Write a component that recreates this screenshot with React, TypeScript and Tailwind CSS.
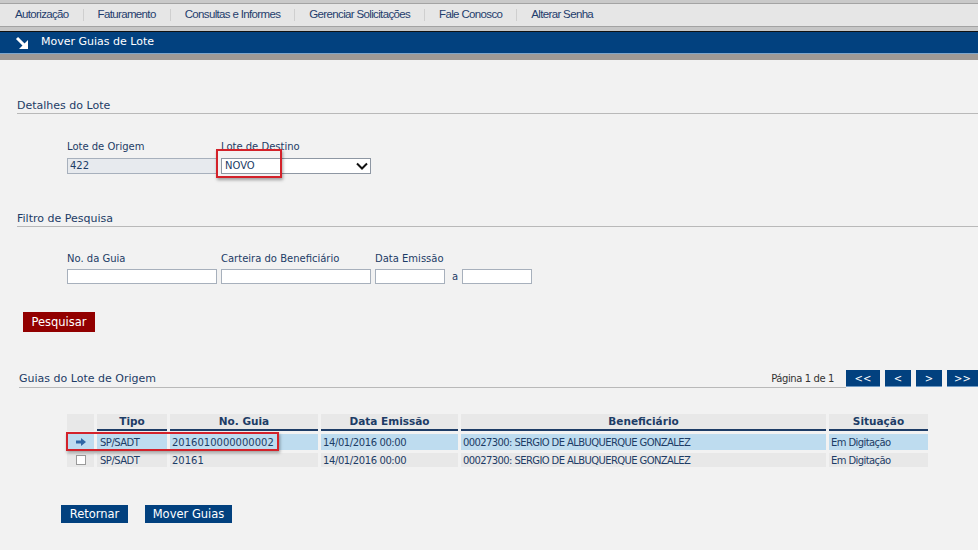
import { useState } from "react";

const menu = [
  "Autorização",
  "Faturamento",
  "Consultas e Informes",
  "Gerenciar Solicitações",
  "Fale Conosco",
  "Alterar Senha",
];

const rows = [
  { tipo: "SP/SADT", guia: "2016010000000002", data: "14/01/2016 00:00", benef: "00027300: SERGIO DE ALBUQUERQUE GONZALEZ", sit: "Em Digitação", sel: true },
  { tipo: "SP/SADT", guia: "20161", data: "14/01/2016 00:00", benef: "00027300: SERGIO DE ALBUQUERQUE GONZALEZ", sit: "Em Digitação", sel: false },
];

function SectionTitle(props: any) {
  return (
    <div className="ml-[17px] border-b border-[#b9b9b9] h-[15px] leading-[13px] text-[11px] text-[#1d3c66]">
      {props.children}
    </div>
  );
}

export default function App() {
  const [destino, setDestino] = useState("NOVO");

  return (
    <div className="w-[978px] h-[550px] bg-[#f2f2f2] overflow-hidden font-['DejaVu_Sans',sans-serif] text-[#1d3c66]">
      {/* top menu */}
      <div className="h-[4px] bg-[#c9c9c9] border-b border-[#a3a3a3]" />
      <div className="h-[22px] bg-[#e6e6e6] flex items-center pl-[15px] font-['Liberation_Sans',sans-serif] text-[11.5px] tracking-[-0.65px] text-[#1f3d6d]">
        {menu.map((m, i) => (
          <div key={m} className="flex items-center">
            {i > 0 && <span className="w-px h-[12px] bg-[#cfcfcf] mx-[14px]" />}
            <span>{m}</span>
          </div>
        ))}
      </div>
      <div className="h-[5px] bg-[#c6c6c6] border-t border-[#a3a3a3]" />
      <div className="h-[23px] bg-[#02417f] border-t border-[#111] border-b border-b-[#7ea6cc] flex items-center pl-[15px] text-white text-[11px]">
        <svg width="14" height="14" viewBox="0 0 14 14" className="mr-[12px]">
          <path d="M2 2 L9 9" stroke="white" strokeWidth="3" />
          <polygon points="13,4 13,13 4,13" fill="white" />
        </svg>
        <span>Mover Guias de Lote</span>
      </div>
      <div className="h-[6px] bg-[#9f9a96]" />

      {/* Detalhes do Lote */}
      <div className="pt-[39px]">
        <SectionTitle>Detalhes do Lote</SectionTitle>
        <div className="relative ml-[67px] mt-[26px] flex gap-[4px] text-[10px]">
          <div className="w-[150px]">
            <div className="h-[14px] leading-[14px]">Lote de Origem</div>
            <div className="mt-[4px] h-[16px] bg-[#e7eaee] border border-[#a7b0bc] pl-[2px] leading-[14px] text-[10px]">422</div>
          </div>
          <div className="w-[150px]">
            <div className="h-[14px] leading-[14px]">Lote de Destino</div>
            <div className="mt-[4px] h-[16px] bg-white border border-[#8e97a3] pl-[3px] leading-[14px] text-[10px] flex items-center justify-between">
              <span onClick={() => setDestino(destino)}>{destino}</span>
              <svg width="12" height="8" viewBox="0 0 12 8" className="mr-[2px]">
                <path d="M1 1.5 L6 6.5 L11 1.5" stroke="#111" strokeWidth="2" fill="none" />
              </svg>
            </div>
          </div>
          <div className="absolute left-[149px] top-[9px] w-[66px] h-[29px] border-2 border-[#d3222a] shadow-[1px_2px_3px_rgba(0,0,0,0.35)]" />
        </div>
      </div>

      {/* Filtro de Pesquisa */}
      <div className="pt-[38px]">
        <SectionTitle>Filtro de Pesquisa</SectionTitle>
        <div className="ml-[67px] mt-[25px] flex gap-[4px] text-[10px]">
          <div className="w-[150px]">
            <div className="h-[14px] leading-[14px]">No. da Guia</div>
            <div className="mt-[3px] h-[15px] bg-white border border-[#a7b0bc]" />
          </div>
          <div className="w-[150px]">
            <div className="h-[14px] leading-[14px]">Carteira do Beneficiário</div>
            <div className="mt-[3px] h-[15px] bg-white border border-[#a7b0bc]" />
          </div>
          <div>
            <div className="h-[14px] leading-[14px]">Data Emissão</div>
            <div className="mt-[3px] flex items-center">
              <div className="w-[70px] h-[15px] bg-white border border-[#a7b0bc]" />
              <span className="ml-[7px] mr-[4px] text-[10px]">a</span>
              <div className="w-[70px] h-[15px] bg-white border border-[#a7b0bc]" />
            </div>
          </div>
        </div>
        <button className="block ml-[23px] mt-[28px] w-[72px] h-[20px] bg-[#920000] text-white text-[11.5px] leading-[20px]">
          Pesquisar
        </button>
      </div>

      {/* Guias do Lote de Origem */}
      <div className="pt-[38px] flex items-end">
        <div className="flex-1 ml-[19px] border-b border-[#b9b9b9] h-[16px] leading-[13px] text-[11px] flex justify-between">
          <span>Guias do Lote de Origem</span>
          <span className="text-[10px] tracking-[-0.4px] leading-[13px] mr-[12px] text-[#333]">Página 1 de 1</span>
        </div>
        <div className="flex gap-[5px] mb-[1px] text-white text-[10px]">
          {["<<", "<", ">", ">>"].map((b, i) => (
            <div
              key={b}
              className={`h-[17px] ${i === 0 ? "w-[34px]" : i === 3 ? "w-[31px]" : "w-[26px]"} bg-[#02417f] border-b border-[#6e9ac4] flex items-center justify-center`}
            >
              {b}
            </div>
          ))}
        </div>
      </div>

      <div className="relative ml-[64px] mt-[23px]">
        <table className="border-separate border-spacing-[3px] text-[10px]">
          <thead>
            <tr className="h-[17px]">
              <th className="w-[27px] bg-[#e8e8e8] p-0" />
              <th className="w-[70px] bg-[#e8e8e8] border-b-2 border-[#1d3c66] text-[10.5px] font-bold p-0 leading-[15px]">Tipo</th>
              <th className="w-[148px] bg-[#e8e8e8] border-b-2 border-[#1d3c66] text-[10.5px] font-bold p-0 leading-[15px]">No. Guia</th>
              <th className="w-[137px] bg-[#e8e8e8] border-b-2 border-[#1d3c66] text-[10.5px] font-bold p-0 leading-[15px]">Data Emissão</th>
              <th className="w-[365px] bg-[#e8e8e8] border-b-2 border-[#1d3c66] text-[10.5px] font-bold p-0 leading-[15px]">Beneficiário</th>
              <th className="w-[99px] bg-[#e8e8e8] border-b-2 border-[#1d3c66] text-[10.5px] font-bold p-0 leading-[15px]">Situação</th>
            </tr>
          </thead>
          <tbody>
            {rows.map((r) => (
              <tr key={r.guia} className={`${r.sel ? "h-[16px] bg-[#bedcef]" : "h-[14px] bg-[#e8e8e8]"}`}>
                <td className="text-center p-0 h-[inherit]">
                  <div className="flex items-center justify-center">
                    {r.sel ? (
                      <svg width="10" height="8" viewBox="0 0 10 8">
                        <path d="M0 2.5 H5 V0 L10 4 L5 8 V5.5 H0 Z" fill="#2f67a5" />
                      </svg>
                    ) : (
                      <span className="block w-[10px] h-[10px] bg-white border border-[#9a9a9a]" />
                    )}
                  </div>
                </td>
                <td className="pl-[3px] p-0 leading-[13px] tracking-[-0.5px]">{r.tipo}</td>
                <td className="pl-[2px] p-0 leading-[13px]">{r.guia}</td>
                <td className="pl-[2px] p-0 leading-[13px] tracking-[-0.4px]">{r.data}</td>
                <td className="pl-[2px] p-0 leading-[13px] tracking-[-0.6px]">{r.benef}</td>
                <td className="pl-[2px] p-0 leading-[13px] tracking-[-0.6px]">{r.sit}</td>
              </tr>
            ))}
          </tbody>
        </table>
        <div className="absolute left-[2px] top-[21px] w-[213px] h-[19px] border-2 border-[#d3222a] shadow-[1px_2px_3px_rgba(0,0,0,0.35)]" />
      </div>

      <div className="ml-[61px] mt-[35px] flex gap-[17px] text-white text-[11.5px]">
        <button className="w-[67px] h-[18px] bg-[#02417f] leading-[18px]">Retornar</button>
        <button className="w-[87px] h-[18px] bg-[#02417f] leading-[18px]">Mover Guias</button>
      </div>
    </div>
  );
}
